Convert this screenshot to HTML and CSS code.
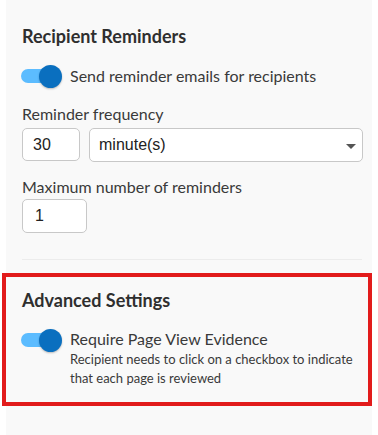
FILE: index.html
```html
<!DOCTYPE html>
<html>
<head>
<meta charset="utf-8">
<link rel="stylesheet" href="styles.css">
</head>
<body>
<div class="panel">
  <h2 class="title">Recipient Reminders</h2>
  <div class="toggle-row">
    <span class="toggle"><span class="track"></span><span class="knob"></span></span>
    <span class="toggle-label">Send reminder emails for recipients</span>
  </div>
  <div class="field-label first">Reminder frequency</div>
  <div class="freq-row">
    <div class="input small">30</div>
    <div class="select">minute(s)<span class="caret"></span></div>
  </div>
  <div class="field-label second">Maximum number of reminders</div>
  <div class="input max">1</div>
  <div class="divider"></div>
  <div class="advanced">
    <h2 class="title">Advanced Settings</h2>
    <div class="toggle-row top">
      <span class="toggle"><span class="track"></span><span class="knob"></span></span>
      <div class="text-block">
        <div class="toggle-label">Require Page View Evidence</div>
        <div class="desc">Recipient needs to click on a checkbox to indicate that each page is reviewed</div>
      </div>
    </div>
  </div>
</div>
</body>
</html>
```
FILE: styles.css
```css
html, body {
  margin: 0;
  padding: 0;
  background: #ffffff;
}
body {
  font-family: Lato, "Noto Sans", sans-serif;
  color: #333;
}
.panel {
  margin-left: 6px;
  width: 366px;
  min-height: 435px;
  box-sizing: border-box;
  background: #f9f9f9;
  padding: 25px 0 0 16px;
}
.title {
  margin: 0;
  font-size: 18px;
  line-height: 22px;
  font-weight: 700;
  color: #2f2f2f;
}
.toggle-row {
  display: flex;
  align-items: center;
  margin-top: 18px;
  height: 22px;
}
.toggle-row.top {
  align-items: flex-start;
  height: auto;
  margin-top: 18px;
}
.toggle {
  position: relative;
  width: 41px;
  height: 22px;
  flex: none;
  margin-left: -1px;
  margin-right: 8px;
}
.toggle-row.top .toggle {
  margin-top: 0;
}
.track {
  position: absolute;
  left: 0;
  top: 4px;
  width: 36px;
  height: 14px;
  border-radius: 7px;
  background: #5cbcff;
}
.knob {
  position: absolute;
  right: 0;
  top: -0.5px;
  width: 23px;
  height: 23px;
  border-radius: 50%;
  background: #0a6fbf;
  box-shadow: 0 1px 2px rgba(0,0,0,0.25);
}
.toggle-label {
  font-size: 16px;
  line-height: 20px;
  color: #3a3a3a;
}
.desc {
  margin-top: 1px;
  font-size: 13px;
  line-height: 19px;
  color: #3a3a3a;
  width: 295px;
}
.field-label {
  font-size: 16px;
  line-height: 20px;
  color: #3a3a3a;
}
.field-label.first {
  margin-top: 17px;
}
.field-label.second {
  margin-top: 15px;
}
.freq-row {
  display: flex;
  align-items: flex-start;
  margin-top: 4px;
  gap: 9px;
}
.input {
  box-sizing: border-box;
  border: 1px solid #c8c8c8;
  border-radius: 5px;
  background: #fff;
  font-family: "Liberation Sans", Arial, sans-serif;
  font-size: 16px;
  color: #222;
  display: flex;
  align-items: center;
  padding-left: 10px;
}
.input.small {
  width: 58px;
  height: 33px;
}
.input.max {
  width: 65px;
  height: 34px;
  margin-top: 2px;
  padding-left: 12px;
}
.select {
  position: relative;
  box-sizing: border-box;
  width: 274px;
  height: 34px;
  border: 1px solid #c8c8c8;
  border-radius: 5px;
  background: #fff;
  font-family: "Liberation Sans", Arial, sans-serif;
  font-size: 16px;
  color: #222;
  display: flex;
  align-items: center;
  padding-left: 9px;
}
.caret {
  position: absolute;
  right: 6px;
  top: 15px;
  width: 0;
  height: 0;
  border-left: 5px solid transparent;
  border-right: 5px solid transparent;
  border-top: 5px solid #555;
}
.divider {
  margin-top: 26px;
  width: 340px;
  height: 1px;
  background: #ececec;
}
.advanced {
  margin-top: 13px;
  margin-left: -20px;
  width: 370px;
  box-sizing: border-box;
  border: 4px solid #e21b1b;
  padding: 12px 0 14px 16px;
}
```
